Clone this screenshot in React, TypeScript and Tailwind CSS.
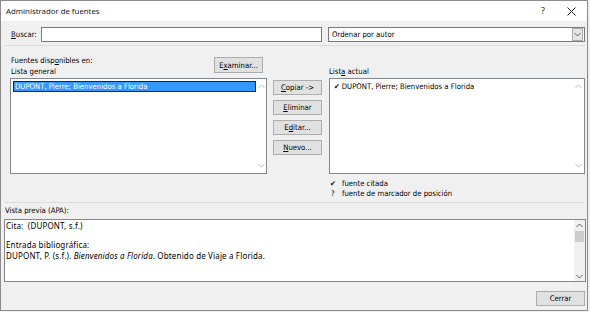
import React from 'react';

const ui = "font-['DejaVu_Sans_Condensed','DejaVu_Sans',sans-serif] [font-stretch:condensed]";

function Chevron({ up, dark }: { up?: boolean; dark?: boolean }) {
  return (
    <svg width="7" height="5" viewBox="0 0 7 5" className="block">
      <polyline
        points={up ? '0.5,4 3.5,1 6.5,4' : '0.5,1 3.5,4 6.5,1'}
        fill="none"
        stroke={dark ? '#606060' : '#bdbdbd'}
        strokeWidth="1"
      />
    </svg>
  );
}

function Btn({ children, className = '' }: { children: React.ReactNode; className?: string }) {
  return (
    <div
      className={`h-[15px] w-[49px] flex items-center justify-center bg-[#e1e1e1] border border-[#adadad] text-black ${className}`}
    >
      {children}
    </div>
  );
}

function ListBox({ children }: { children?: React.ReactNode }) {
  return (
    <div className="relative h-[96px] bg-white border border-[#828790] flex">
      <div className="flex-1 pt-[1px] pl-[1px]">{children}</div>
      <div className="w-[12px] flex flex-col items-center justify-between py-[5px]">
        <Chevron up />
        <Chevron />
      </div>
    </div>
  );
}

export default function App() {
  return (
    <div className={`w-[590px] h-[312px] bg-[#f0f0f0] ${ui} text-[7.7px] leading-[10px] text-black`}>
      <div className="w-[588px] h-[311px] border border-[#8c8c8c] flex flex-col">
        {/* title bar */}
        <div className="h-[20px] bg-white flex items-center shrink-0">
          <span className="pl-[5px] font-['Noto_Sans',sans-serif] [font-stretch:normal] text-[7.8px] text-[#1a1a1a] flex-1">
            Administrador de fuentes
          </span>
          <span className="font-['Noto_Sans',sans-serif] [font-stretch:normal] text-[9px] text-[#222] w-[10px] text-center mr-[19px]">?</span>
          <svg width="9" height="9" viewBox="0 0 9 9" className="mr-[11px]">
            <path d="M0.5 0.5 L8.5 8.5 M8.5 0.5 L0.5 8.5" stroke="#222" strokeWidth="1" />
          </svg>
        </div>

        {/* search row */}
        <div className="flex items-center mt-[6px] h-[15px]">
          <span className="pl-[10px] w-[40px]">
            <span className="underline">B</span>uscar:
          </span>
          <div className="w-[281px] h-[15px] bg-white border border-[#7a7a7a]" />
          <div className="ml-[6px] w-[257px] h-[15px] bg-white border border-[#7a7a7a] flex items-center">
            <span className="flex-1 pl-[3px]">Ordenar por autor</span>
            <div className="w-[11px] h-[13px] mr-[1px] bg-[#e5e5e5] border border-[#adadad] flex items-center justify-center">
              <Chevron dark />
            </div>
          </div>
        </div>

        <div className="mt-[3px] ml-[3px] w-[581px] h-px bg-[#dcdcdc]" />

        {/* lists */}
        <div className="flex mt-[9px] pl-[9px]">
          <div className="w-[257px] flex flex-col">
            <div className="flex leading-[11px]">
              <div className="flex-1 pl-[1px]">
                <div>
                  Fuentes disp<span className="underline">o</span>nibles en:
                </div>
                <div>Lista general</div>
              </div>
              <Btn className="mt-[2px] mr-[4px] w-[46px] h-[16px]">
                E<span className="underline">x</span>aminar...
              </Btn>
            </div>
            <div className="mt-[1px]">
              <ListBox>
                <div className="ml-[1px] mt-[1px] w-[243px] h-[11px] bg-[#3399ff] border border-[#2b2418] text-white flex items-center pl-[1px]">
                  DUPONT, Pierre; Bienvenidos a Florida
                </div>
              </ListBox>
            </div>
          </div>

          <div className="ml-[6px] pt-[25px] flex flex-col gap-[5px]">
            <Btn>
              <span className="underline">C</span>opiar -&gt;
            </Btn>
            <Btn>
              <span className="underline">E</span>liminar
            </Btn>
            <Btn>
              E<span className="underline">d</span>itar...
            </Btn>
            <Btn>
              <span className="underline">N</span>uevo...
            </Btn>
          </div>

          <div className="ml-[7px] w-[256px] flex flex-col">
            <div className="leading-[11px] pt-[11px]">
              List<span className="underline">a</span> actual
            </div>
            <div className="mt-[1px]">
              <ListBox>
                <div className="pl-[3px] pt-[2px] flex items-center gap-[2px]">
                  <span>✔</span>
                  <span>DUPONT, Pierre; Bienvenidos a Florida</span>
                </div>
              </ListBox>
            </div>
            <div className="mt-[5px] pl-[1px]">
              <div className="flex">
                <span className="w-[12px]">✔</span>
                <span>fuente citada</span>
              </div>
              <div className="flex">
                <span className="w-[12px] pl-[1px]">?</span>
                <span>fuente de marcador de posición</span>
              </div>
            </div>
          </div>
        </div>

        <div className="mt-[3px] ml-[3px] w-[581px] h-px bg-[#dcdcdc]" />

        {/* preview */}
        <div className="mt-[3px] pl-[4px]">Vista previa (APA):</div>
        <div className="mt-[3px] ml-[3px] w-[582px] h-[63px] bg-white border border-[#828790] flex">
          <div className="flex-1 pl-[1px] font-['Noto_Sans',sans-serif] [font-stretch:normal] text-[8px] tracking-[0.15px] leading-[11px]">
            <div>Cita:&nbsp; (DUPONT, s.f.)</div>
            <div className="h-[8px]" />
            <div>Entrada bibliográfica:</div>
            <div>
              DUPONT, P. (s.f.). <i>Bienvenidos a Florida</i>. Obtenido de Viaje a Florida.
            </div>
          </div>
          <div className="w-[11px] flex flex-col items-center bg-[#f0f0f0]">
            <div className="h-[10px] flex items-center">
              <Chevron up dark />
            </div>
            <div className="w-[9px] h-[11px] bg-[#cdcdcd] mt-[1px]" />
            <div className="flex-1" />
            <div className="h-[10px] flex items-center">
              <Chevron dark />
            </div>
          </div>
        </div>

        <div className="flex justify-end mt-[9px] pr-[2px]">
          <Btn>Cerrar</Btn>
        </div>
      </div>
    </div>
  );
}
